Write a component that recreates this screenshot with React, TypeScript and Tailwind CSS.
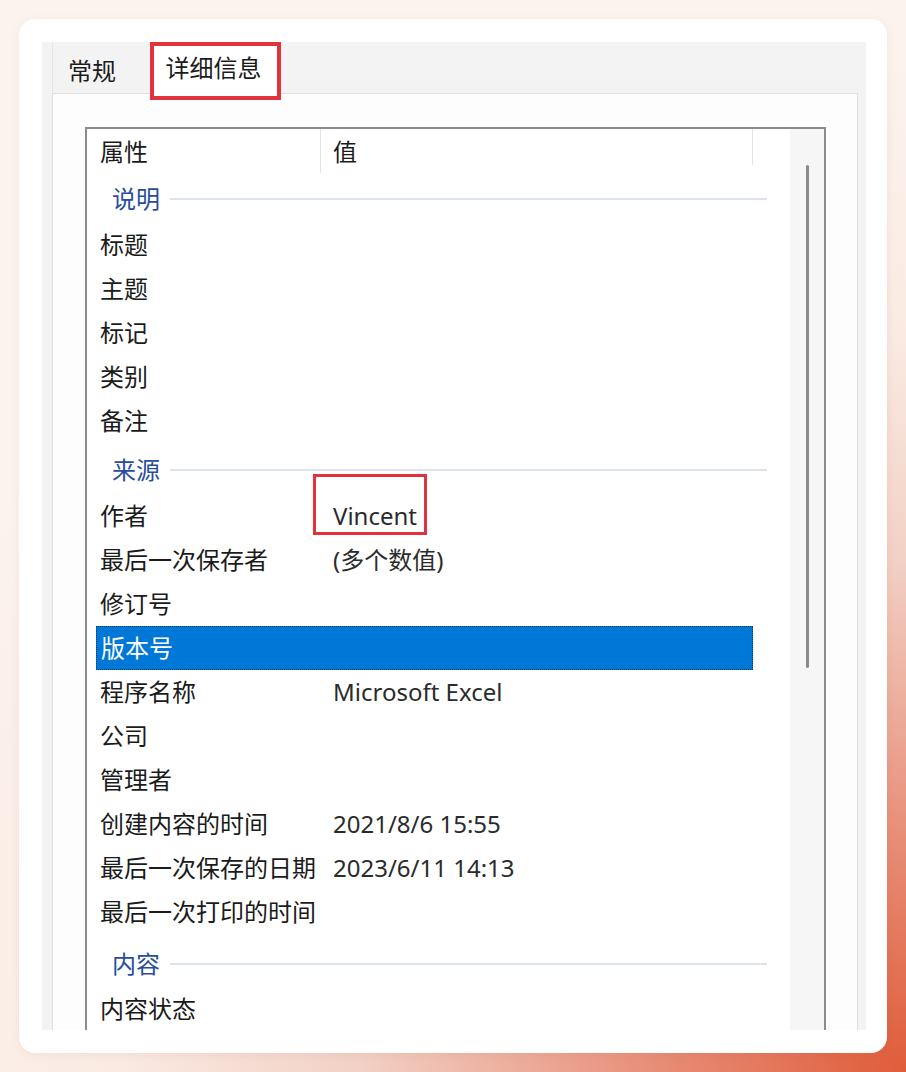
import React from "react";

type Row =
  | { kind: "group"; label: string; h: string; pt: string }
  | { kind: "item"; name: string; value?: string; selected?: boolean; boxed?: boolean };

const rows: Row[] = [
  { kind: "group", label: "说明", h: "h-[48px]", pt: "pt-0" },
  { kind: "item", name: "标题" },
  { kind: "item", name: "主题" },
  { kind: "item", name: "标记" },
  { kind: "item", name: "类别" },
  { kind: "item", name: "备注" },
  { kind: "group", label: "来源", h: "h-[51px]", pt: "pt-[3px]" },
  { kind: "item", name: "作者", value: "Vincent", boxed: true },
  { kind: "item", name: "最后一次保存者", value: "(多个数值)" },
  { kind: "item", name: "修订号" },
  { kind: "item", name: "版本号", selected: true },
  { kind: "item", name: "程序名称", value: "Microsoft Excel" },
  { kind: "item", name: "公司" },
  { kind: "item", name: "管理者" },
  { kind: "item", name: "创建内容的时间", value: "2021/8/6 15:55" },
  { kind: "item", name: "最后一次保存的日期", value: "2023/6/11 14:13" },
  { kind: "item", name: "最后一次打印的时间" },
  { kind: "group", label: "内容", h: "h-[53px]", pt: "pt-[6px]" },
  { kind: "item", name: "内容状态" },
];

function GroupRow({ label, h, pt }: { label: string; h: string; pt: string }) {
  return (
    <div className={`flex items-center pl-[25px] pr-[23px] ${h} ${pt}`}>
      <span className="text-[#274d9c]">{label}</span>
      <div className="ml-[10px] h-[2px] flex-1 bg-[#dde3ea]" />
    </div>
  );
}

function ItemRow({ name, value, selected, boxed }: { name: string; value?: string; selected?: boolean; boxed?: boolean }) {
  return (
    <div
      className={`ml-[9px] flex h-[44px] w-[657px] items-center pl-[4px] ${
        selected ? "border border-dotted border-[#0a3d70] bg-[#0078d7] text-white" : ""
      }`}
    >
      <span className="w-[233px] shrink-0 whitespace-nowrap">{name}</span>
      {value && (
        <span className="relative whitespace-nowrap text-[#2b2b2b]">
          {value}
          {/* highlight box drawn over the author value */}
          {boxed && (
            <span className="absolute -left-[20px] -right-[10px] -top-[30px] -bottom-[7px] border-[3px] border-[#e0333b]" />
          )}
        </span>
      )}
    </div>
  );
}

export default function App() {
  return (
    <div
      className="h-[1072px] w-full overflow-hidden bg-[radial-gradient(ellipse_120%_95%_at_100%_100%,#df5c3a_0%,#e8907a_24%,#f2d0c5_50%,#faeae2_72%,#fcf3ee_100%)] px-[19px] pt-[19px] text-[24px] text-[#1b1b1b]"
      style={{ fontFamily: '"Noto Sans", "Noto Sans CJK SC", sans-serif' }}
    >
      <div className="h-[1034px] overflow-hidden rounded-[16px] bg-white pl-[23px] pr-[21px] pt-[23px] shadow-[0_2px_10px_rgba(160,80,50,0.08)]">
        <div className="flex h-[988px] flex-col overflow-hidden bg-[#f3f3f3]">
          {/* tab strip */}
          <div className="relative z-10 flex h-[51px] items-start pl-[10px]">
            <div className="flex h-[51px] w-[98px] items-center border-l border-[#e6e6e6] pl-[15px] pt-[6px] leading-none">
              常规
            </div>
            <div className="-mb-[7px] flex h-[58px] w-[131px] items-center justify-center border-[4px] border-[#e0333b] bg-white pb-[6px] pr-[4px] leading-none">
              详细信息
            </div>
          </div>

          {/* tab panel */}
          <div className="ml-[10px] mr-[8px] flex-1 border border-[#dedede] bg-[#fdfdfd] pl-[32px] pr-[31px] pt-[33px]">
            <div className="flex h-full border-2 border-[#8c8c8c] bg-white">
              <div className="w-[703px] leading-none">
                {/* header */}
                <div className="flex h-[46px] items-stretch">
                  <div className="flex w-[233px] items-center pl-[13px]">属性</div>
                  <div className="mb-[2px] w-px bg-[#e4e4e4]" />
                  <div className="flex w-[431px] items-center pl-[12px]">值</div>
                  <div className="mb-[10px] w-px bg-[#e4e4e4]" />
                </div>
                {rows.map((r, i) =>
                  r.kind === "group" ? (
                    <GroupRow key={i} label={r.label} h={r.h} pt={r.pt} />
                  ) : (
                    <ItemRow key={i} name={r.name} value={r.value} selected={r.selected} boxed={r.boxed} />
                  )
                )}
              </div>
              {/* scrollbar */}
              <div className="flex w-[34px] justify-center bg-[#f6f6f6] pt-[36px]">
                <div className="h-[503px] w-[3px] rounded-full bg-[#8a8a8a]" />
              </div>
            </div>
          </div>
        </div>
      </div>
    </div>
  );
}
